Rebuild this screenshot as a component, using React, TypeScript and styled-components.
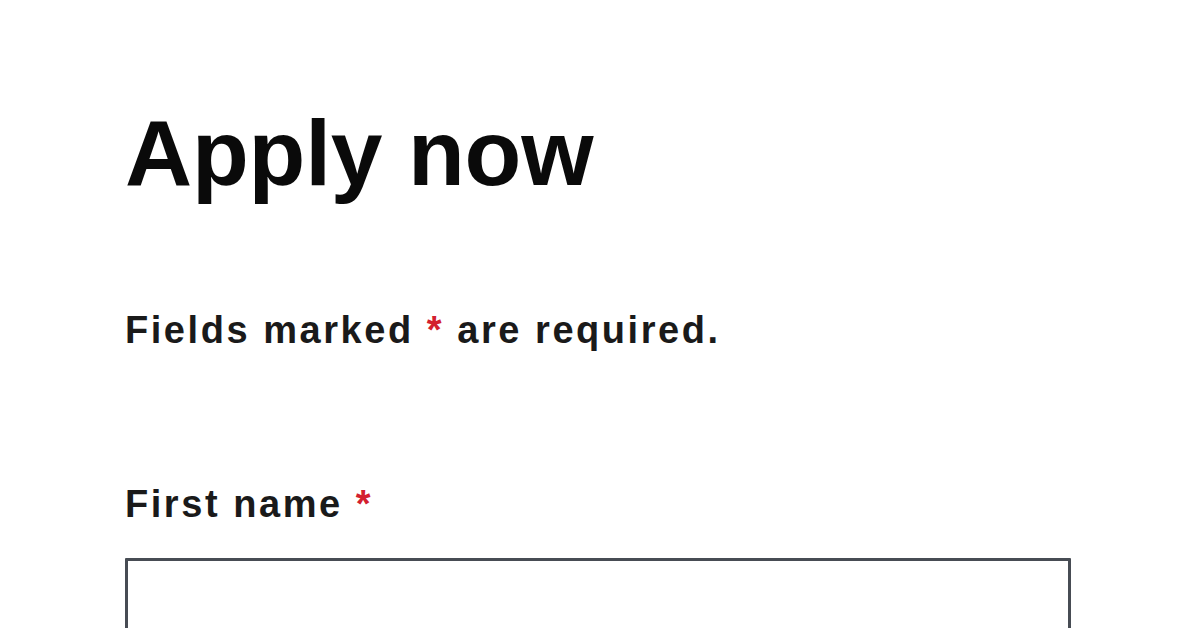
import React from "react";
import styled, { createGlobalStyle } from "styled-components";

const GlobalStyle = createGlobalStyle`
  html, body {
    margin: 0;
    padding: 0;
    background: #ffffff;
  }
  body {
    font-family: "Liberation Sans", Arial, Helvetica, sans-serif;
    color: #111111;
  }
`;

const Page = styled.main`
  padding: 103px 125px 0 125px;
  height: 628px;
  box-sizing: border-box;
  overflow: hidden;
`;

const Title = styled.h1`
  margin: 0;
  font-size: 93px;
  font-weight: 700;
  line-height: 100px;
  letter-spacing: -0.2px;
  color: #0a0a0a;
`;

const Note = styled.p`
  margin: 103px 0 0 0;
  font-size: 38px;
  font-weight: 700;
  line-height: 48px;
  letter-spacing: 2.55px;
  color: #1a1a1a;
`;

const Star = styled.span`
  color: #d3202f;
`;

const Field = styled.div`
  margin-top: 126px;
  display: flex;
  flex-direction: column;
  gap: 30px;
`;

const Label = styled.label`
  font-size: 38px;
  font-weight: 700;
  line-height: 48px;
  letter-spacing: 2.55px;
  color: #1a1a1a;
`;

const Input = styled.input`
  box-sizing: border-box;
  width: 946px;
  height: 120px;
  border: 3px solid #474c54;
  border-radius: 1px;
  background: #fff;
  outline: none;
`;

export default function App() {
  return (
    <>
      <GlobalStyle />
      <Page>
        <Title>Apply now</Title>
        <Note>
          Fields marked <Star>*</Star> are required.
        </Note>
        <Field>
          <Label htmlFor="first-name">
            First name <Star>*</Star>
          </Label>
          <Input id="first-name" type="text" />
        </Field>
      </Page>
    </>
  );
}
